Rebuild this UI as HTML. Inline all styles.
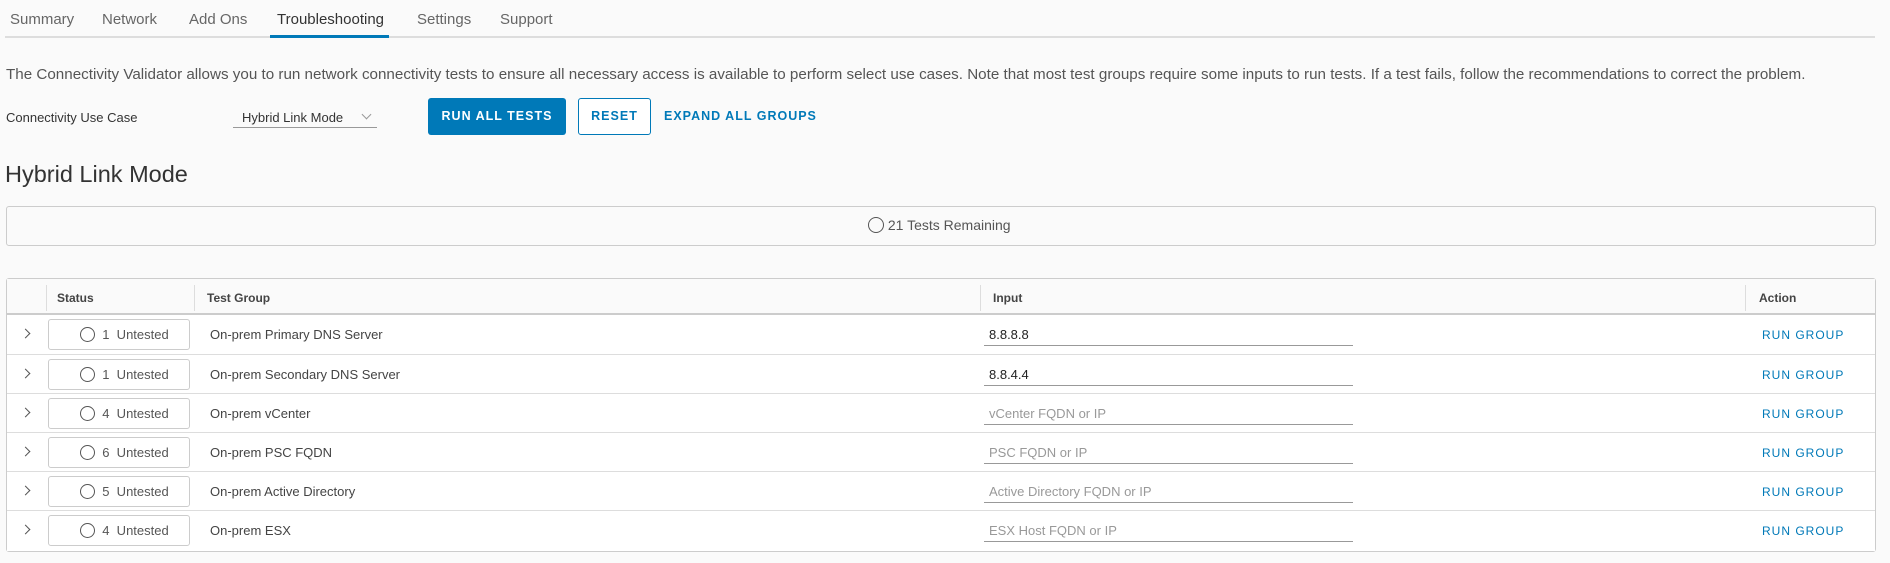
<!DOCTYPE html>
<html><head><meta charset="utf-8"><style>
*{box-sizing:border-box;margin:0;padding:0}
body{width:1890px;height:563px;background:#fafafa;font-family:"Liberation Sans",sans-serif;color:#565656;position:relative;overflow:hidden}
.a{position:absolute;white-space:nowrap}
.tab{font-size:15px;top:11px;color:#666}
.circ{display:inline-block;width:16px;height:16px;border:1.5px solid #555;border-radius:50%;vertical-align:-3px}
.btn{position:absolute;font-size:12.5px;letter-spacing:1px;font-weight:bold;text-align:center}
.row{position:absolute;left:7px;width:1868px;height:39px;border-top:1px solid #ddd;background:#fff}
.hdr{font-size:12px;font-weight:bold;color:#444;top:12px}
.vd{position:absolute;top:6px;width:1px;height:26px;background:#ddd}
.chev{position:absolute;left:15px;top:15px;width:7px;height:7px;border-top:1.3px solid #555;border-right:1.3px solid #555;transform:rotate(45deg)}
</style></head><body>
<div class="a tab" style="left:10px">Summary</div>
<div class="a tab" style="left:102px">Network</div>
<div class="a tab" style="left:189px">Add Ons</div>
<div class="a tab" style="left:277px;color:#333">Troubleshooting</div>
<div class="a tab" style="left:417px">Settings</div>
<div class="a tab" style="left:500px">Support</div>
<div class="a" style="left:5px;top:36px;width:1870px;height:2px;background:#ddd"></div>
<div class="a" style="left:270px;top:35px;width:119px;height:3px;background:#0079b8"></div>
<div class="a" style="left:6px;top:66px;font-size:15.2px;color:#555">The Connectivity Validator allows you to run network connectivity tests to ensure all necessary access is available to perform select use cases. Note that most test groups require some inputs to run tests. If a test fails, follow the recommendations to correct the problem.</div>
<div class="a" style="left:6px;top:110px;font-size:13px;color:#333">Connectivity Use Case</div>
<div class="a" style="left:242px;top:110px;font-size:13px;color:#333">Hybrid Link Mode</div>
<div class="a" style="left:363px;top:111px;width:7px;height:7px;border-right:1px solid #999;border-bottom:1px solid #999;transform:rotate(45deg)"></div>
<div class="a" style="left:233px;top:127px;width:144px;height:1px;background:#999"></div>
<div class="btn" style="left:428px;top:98px;width:138px;height:37px;line-height:37px;background:#0079b8;color:#fff;border-radius:3px">RUN ALL TESTS</div>
<div class="btn" style="left:578px;top:98px;width:73px;height:37px;line-height:35px;border:1px solid #0079b8;color:#0079b8;border-radius:3px;background:#fff">RESET</div>
<div class="btn" style="left:664px;top:98px;height:37px;line-height:37px;color:#0079b8">EXPAND ALL GROUPS</div>
<div class="a" style="left:5px;top:161px;font-size:23.5px;color:#333">Hybrid Link Mode</div>
<div class="a" style="left:6px;top:206px;width:1870px;height:40px;border:1px solid #ccc;border-radius:3px;background:#fafafa"></div>
<div class="a" style="left:868px;top:217px;font-size:14px;color:#555"><span class="circ"></span>&nbsp;21 Tests Remaining</div>
<div class="a" style="left:6px;top:278px;width:1870px;height:274px;border:1px solid #ccc;border-radius:3px;background:#fff"></div>
<div class="a" style="left:7px;top:279px;width:1868px;height:36px;background:#fafafa;border-bottom:2px solid #ccc">
<div class="vd" style="left:39px"></div><div class="vd" style="left:187px"></div><div class="vd" style="left:973px"></div><div class="vd" style="left:1738px"></div>
<div class="a hdr" style="left:50px">Status</div><div class="a hdr" style="left:200px">Test Group</div><div class="a hdr" style="left:986px">Input</div><div class="a hdr" style="left:1752px">Action</div>
</div>
<div class="row" style="top:315px;border-top:none">
<div class="chev"></div>
<div class="a" style="left:41px;top:4px;width:142px;height:31px;border:1px solid #ccc;border-radius:3px;font-size:13px;line-height:29px;padding-left:31px"><span class="circ" style="width:15px;height:15px"></span>&nbsp; 1&nbsp; Untested</div>
<div class="a" style="left:203px;top:12px;font-size:13px;color:#444">On-prem Primary DNS Server</div>
<div class="a" style="left:982px;top:12px;font-size:13px;color:#222">8.8.8.8</div>
<div class="a" style="left:977px;top:30px;width:369px;height:1px;background:#999"></div>
<div class="a" style="left:1755px;top:13px;font-size:12px;letter-spacing:1px;color:#0079b8">RUN GROUP</div>
</div>
<div class="row" style="top:354px">
<div class="chev"></div>
<div class="a" style="left:41px;top:4px;width:142px;height:31px;border:1px solid #ccc;border-radius:3px;font-size:13px;line-height:29px;padding-left:31px"><span class="circ" style="width:15px;height:15px"></span>&nbsp; 1&nbsp; Untested</div>
<div class="a" style="left:203px;top:12px;font-size:13px;color:#444">On-prem Secondary DNS Server</div>
<div class="a" style="left:982px;top:12px;font-size:13px;color:#222">8.8.4.4</div>
<div class="a" style="left:977px;top:30px;width:369px;height:1px;background:#999"></div>
<div class="a" style="left:1755px;top:13px;font-size:12px;letter-spacing:1px;color:#0079b8">RUN GROUP</div>
</div>
<div class="row" style="top:393px">
<div class="chev"></div>
<div class="a" style="left:41px;top:4px;width:142px;height:31px;border:1px solid #ccc;border-radius:3px;font-size:13px;line-height:29px;padding-left:31px"><span class="circ" style="width:15px;height:15px"></span>&nbsp; 4&nbsp; Untested</div>
<div class="a" style="left:203px;top:12px;font-size:13px;color:#444">On-prem vCenter</div>
<div class="a" style="left:982px;top:12px;font-size:13px;color:#999">vCenter FQDN or IP</div>
<div class="a" style="left:977px;top:30px;width:369px;height:1px;background:#999"></div>
<div class="a" style="left:1755px;top:13px;font-size:12px;letter-spacing:1px;color:#0079b8">RUN GROUP</div>
</div>
<div class="row" style="top:432px">
<div class="chev"></div>
<div class="a" style="left:41px;top:4px;width:142px;height:31px;border:1px solid #ccc;border-radius:3px;font-size:13px;line-height:29px;padding-left:31px"><span class="circ" style="width:15px;height:15px"></span>&nbsp; 6&nbsp; Untested</div>
<div class="a" style="left:203px;top:12px;font-size:13px;color:#444">On-prem PSC FQDN</div>
<div class="a" style="left:982px;top:12px;font-size:13px;color:#999">PSC FQDN or IP</div>
<div class="a" style="left:977px;top:30px;width:369px;height:1px;background:#999"></div>
<div class="a" style="left:1755px;top:13px;font-size:12px;letter-spacing:1px;color:#0079b8">RUN GROUP</div>
</div>
<div class="row" style="top:471px">
<div class="chev"></div>
<div class="a" style="left:41px;top:4px;width:142px;height:31px;border:1px solid #ccc;border-radius:3px;font-size:13px;line-height:29px;padding-left:31px"><span class="circ" style="width:15px;height:15px"></span>&nbsp; 5&nbsp; Untested</div>
<div class="a" style="left:203px;top:12px;font-size:13px;color:#444">On-prem Active Directory</div>
<div class="a" style="left:982px;top:12px;font-size:13px;color:#999">Active Directory FQDN or IP</div>
<div class="a" style="left:977px;top:30px;width:369px;height:1px;background:#999"></div>
<div class="a" style="left:1755px;top:13px;font-size:12px;letter-spacing:1px;color:#0079b8">RUN GROUP</div>
</div>
<div class="row" style="top:510px;height:41px">
<div class="chev"></div>
<div class="a" style="left:41px;top:4px;width:142px;height:31px;border:1px solid #ccc;border-radius:3px;font-size:13px;line-height:29px;padding-left:31px"><span class="circ" style="width:15px;height:15px"></span>&nbsp; 4&nbsp; Untested</div>
<div class="a" style="left:203px;top:12px;font-size:13px;color:#444">On-prem ESX</div>
<div class="a" style="left:982px;top:12px;font-size:13px;color:#999">ESX Host FQDN or IP</div>
<div class="a" style="left:977px;top:30px;width:369px;height:1px;background:#999"></div>
<div class="a" style="left:1755px;top:13px;font-size:12px;letter-spacing:1px;color:#0079b8">RUN GROUP</div>
</div>
</body></html>
